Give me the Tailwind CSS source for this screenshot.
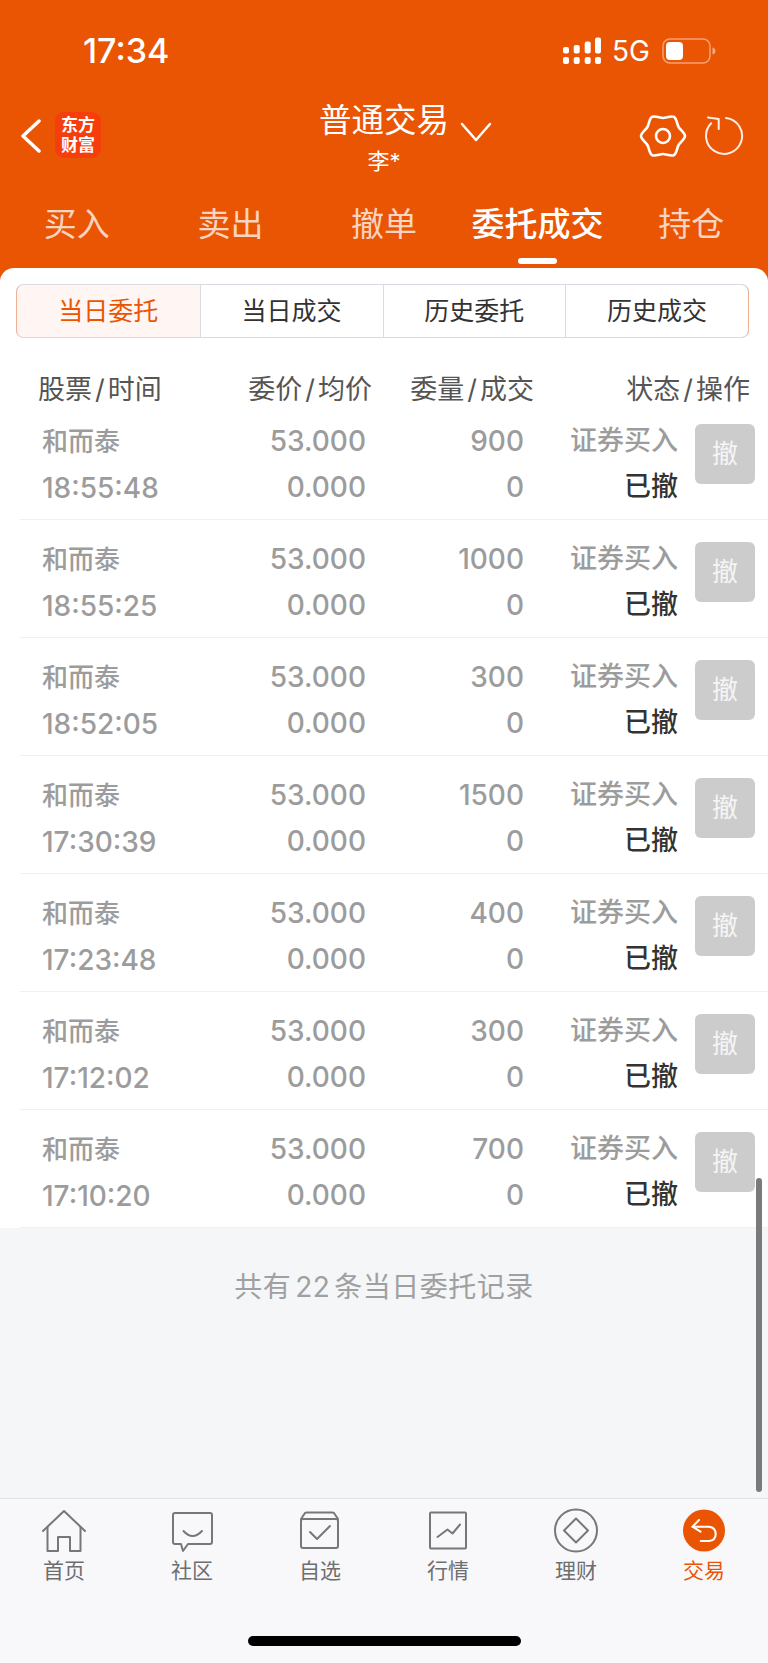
<!DOCTYPE html>
<html lang="zh">
<head>
    <meta charset="UTF-8" />
    <meta name="viewport" content="width=device-width, initial-scale=1.0">
    <title>委托成交</title>
    <script src="https://cdn.jsdelivr.net/npm/@tailwindcss/browser@4"></script>
</head>
<body class="bg-[#f5f6f8] font-['Inter','Noto_Sans_CJK_SC',sans-serif]">
<div class="relative w-[768px] h-[1663px] overflow-hidden flex flex-col">
    <!-- Orange header -->
    <header class="bg-[#ea5504] text-white h-[280px] shrink-0">
        <!-- Status bar -->
        <div class="h-[100px] flex items-start justify-between pl-[83px] pr-[52px] pt-[32px]">
            <span class="text-[34px] leading-[38px] font-medium">17:34</span>
            <div class="flex items-center gap-[11px] h-[38px]">
                <svg width="38" height="28" viewBox="0 0 38 28" fill="white">
                    <rect x="0" y="10" width="6" height="6.500" rx="2"/><rect x="0" y="20" width="6" height="7" rx="2"/>
                    <rect x="10.700" y="8" width="6" height="8.500" rx="2"/><rect x="10.700" y="20" width="6" height="7" rx="2"/>
                    <rect x="21.700" y="4.500" width="6" height="12" rx="2"/><rect x="21.700" y="20" width="6" height="7" rx="2"/>
                    <rect x="32" y="0.500" width="6" height="16" rx="2"/><rect x="32" y="20" width="6" height="7" rx="2"/>
                </svg>
                <span class="text-[28px] leading-[38px]">5G</span>
                <svg width="54" height="26" viewBox="0 0 54 26" class="ml-[1px]">
                    <rect x="1" y="1" width="47" height="24" rx="7" fill="none" stroke="white" stroke-opacity="0.45" stroke-width="1.500"/>
                    <rect x="4" y="4" width="17" height="18" rx="4" fill="white"/>
                    <path d="M50.500 9.500c2 .5 3 2 3 3.500s-1 3-3 3.500z" fill="white" fill-opacity="0.5"/>
                </svg>
            </div>
        </div>
        <!-- Title bar -->
        <div class="h-[100px] flex items-start pl-[21px] pr-[24px]">
            <svg width="20" height="34" viewBox="0 0 20 34" class="mt-[19px]" fill="none" stroke="white" stroke-width="3.500" stroke-linecap="round" stroke-linejoin="round">
                <path d="M18 2 L2 17 L18 32"/>
            </svg>
            <div class="ml-[14px] mt-[12px] w-[46px] h-[46px] rounded-[9px] bg-[#f63d0c] flex flex-col items-center justify-center text-[17px] leading-[20px] font-bold">
                <span>东方</span><span>财富</span>
            </div>
            <div class="ml-[218px] w-[130px] text-center pt-[1px]">
                <div class="text-[32.500px] leading-[40px] whitespace-nowrap">普通交易</div>
                <div class="text-[22px] leading-[28px] mt-[6px]">李*</div>
            </div>
            <svg width="32" height="20" viewBox="0 0 32 20" class="ml-[11px] mt-[22px]" fill="none" stroke="white" stroke-width="2.500" stroke-linecap="round" stroke-linejoin="round">
                <path d="M2 2 L16 18 L30 2"/>
            </svg>
            <svg width="48" height="48" viewBox="0 0 48 48" class="ml-auto mt-[12px]" fill="none" stroke="white" stroke-width="2.600" stroke-linejoin="round">
                <path d="M24 6C27 6 32.400 3.450 35 4.950C37.600 6.450 38.090 12.400 39.590 15C41.090 17.600 46 21 46 24C46 27 41.090 30.400 39.590 33C38.090 35.600 37.600 41.550 35 43.050C32.400 44.550 27 42 24 42C21 42 15.600 44.550 13 43.050C10.400 41.550 9.910 35.600 8.410 33C6.910 30.400 2 27 2 24C2 21 6.910 17.600 8.410 15C9.910 12.400 10.400 6.450 13 4.950C15.600 3.450 21 6 24 6Z"/>
                <circle cx="24" cy="24" r="7"/>
            </svg>
            <svg width="40" height="40" viewBox="0 0 40 40" class="ml-[17px] mt-[16px]" fill="none" stroke="white" stroke-width="2" stroke-opacity="0.9" stroke-linecap="round" stroke-linejoin="round">
                <path d="M22 2 A18 18 0 1 1 7.200 7.300"/>
                <path d="M4 1.500 L14.700 3 L14.700 13"/>
            </svg>
        </div>
        <!-- Tabs -->
        <nav class="grid grid-cols-5 h-[80px] text-center text-[33px] leading-[44px] text-white/75 pt-[2px]">
            <a>买入</a>
            <a>卖出</a>
            <a>撤单</a>
            <a class="relative text-white font-medium whitespace-nowrap">委托成交<span class="absolute left-[57px] top-[56px] w-[39px] h-[6px] rounded-full bg-white"></span></a>
            <a>持仓</a>
        </nav>
    </header>

    <!-- White card -->
    <main class="-mt-[12px] bg-white rounded-t-[14px] h-[960px] shrink-0 pt-[16px]">
        <div class="ml-[16px] mr-[19px] h-[54px] grid grid-cols-4 border border-[#d8dce2] rounded-[7px] text-[25px] leading-[52px] text-center text-[#333333]">
            <div class="bg-[#fff5f2] text-[#ea5504] border-l border-[#eeb093] rounded-l-[7px] -ml-px">当日委托</div>
            <div class="border-l border-[#d8dce2]">当日成交</div>
            <div class="border-l border-[#d8dce2]">历史委托</div>
            <div class="border-l border-r border-l-[#d8dce2] border-r-[#eeb093] rounded-r-[7px] -mr-px">历史成交</div>
        </div>

        <!-- Column titles -->
        <div class="flex h-[64px] pt-[34px] pl-[38px] text-[27px] leading-[36px] text-[#555555]">
            <div class="w-[150px] whitespace-nowrap">股票<span class="px-[3px]">/</span>时间</div>
            <div class="w-[184px] text-right whitespace-nowrap">委价<span class="px-[3px]">/</span>均价</div>
            <div class="w-[162px] text-right whitespace-nowrap">委量<span class="px-[3px]">/</span>成交</div>
            <div class="w-[216px] text-right whitespace-nowrap">状态<span class="px-[3px]">/</span>操作</div>
        </div>

        <div class="ml-[20px] text-[28px] font-medium leading-[46px] text-[#9c9c9c]">
            <div class="flex h-[118px] pl-[22px] pt-[16px] border-b border-[#f0f0f0]">
                <div class="w-[150px]"><span class="text-[26px]">和而泰</span><br>18:55:48</div>
                <div class="w-[174px] text-right">53.000<br>0.000</div>
                <div class="w-[158px] text-right">900<br>0</div>
                <div class="w-[154px] text-right text-[27px]">证券买入<br><span class="text-[#333333]">已撤</span></div>
                <div class="ml-[17px] mt-[6px] w-[60px] h-[60px] rounded-[6px] bg-[#cccccc] text-white/80 text-center font-normal text-[26px] leading-[60px]">撤</div>
            </div>
            <div class="flex h-[118px] pl-[22px] pt-[16px] border-b border-[#f0f0f0]">
                <div class="w-[150px]"><span class="text-[26px]">和而泰</span><br>18:55:25</div>
                <div class="w-[174px] text-right">53.000<br>0.000</div>
                <div class="w-[158px] text-right">1000<br>0</div>
                <div class="w-[154px] text-right text-[27px]">证券买入<br><span class="text-[#333333]">已撤</span></div>
                <div class="ml-[17px] mt-[6px] w-[60px] h-[60px] rounded-[6px] bg-[#cccccc] text-white/80 text-center font-normal text-[26px] leading-[60px]">撤</div>
            </div>
            <div class="flex h-[118px] pl-[22px] pt-[16px] border-b border-[#f0f0f0]">
                <div class="w-[150px]"><span class="text-[26px]">和而泰</span><br>18:52:05</div>
                <div class="w-[174px] text-right">53.000<br>0.000</div>
                <div class="w-[158px] text-right">300<br>0</div>
                <div class="w-[154px] text-right text-[27px]">证券买入<br><span class="text-[#333333]">已撤</span></div>
                <div class="ml-[17px] mt-[6px] w-[60px] h-[60px] rounded-[6px] bg-[#cccccc] text-white/80 text-center font-normal text-[26px] leading-[60px]">撤</div>
            </div>
            <div class="flex h-[118px] pl-[22px] pt-[16px] border-b border-[#f0f0f0]">
                <div class="w-[150px]"><span class="text-[26px]">和而泰</span><br>17:30:39</div>
                <div class="w-[174px] text-right">53.000<br>0.000</div>
                <div class="w-[158px] text-right">1500<br>0</div>
                <div class="w-[154px] text-right text-[27px]">证券买入<br><span class="text-[#333333]">已撤</span></div>
                <div class="ml-[17px] mt-[6px] w-[60px] h-[60px] rounded-[6px] bg-[#cccccc] text-white/80 text-center font-normal text-[26px] leading-[60px]">撤</div>
            </div>
            <div class="flex h-[118px] pl-[22px] pt-[16px] border-b border-[#f0f0f0]">
                <div class="w-[150px]"><span class="text-[26px]">和而泰</span><br>17:23:48</div>
                <div class="w-[174px] text-right">53.000<br>0.000</div>
                <div class="w-[158px] text-right">400<br>0</div>
                <div class="w-[154px] text-right text-[27px]">证券买入<br><span class="text-[#333333]">已撤</span></div>
                <div class="ml-[17px] mt-[6px] w-[60px] h-[60px] rounded-[6px] bg-[#cccccc] text-white/80 text-center font-normal text-[26px] leading-[60px]">撤</div>
            </div>
            <div class="flex h-[118px] pl-[22px] pt-[16px] border-b border-[#f0f0f0]">
                <div class="w-[150px]"><span class="text-[26px]">和而泰</span><br>17:12:02</div>
                <div class="w-[174px] text-right">53.000<br>0.000</div>
                <div class="w-[158px] text-right">300<br>0</div>
                <div class="w-[154px] text-right text-[27px]">证券买入<br><span class="text-[#333333]">已撤</span></div>
                <div class="ml-[17px] mt-[6px] w-[60px] h-[60px] rounded-[6px] bg-[#cccccc] text-white/80 text-center font-normal text-[26px] leading-[60px]">撤</div>
            </div>
            <div class="flex h-[118px] pl-[22px] pt-[16px] border-b border-[#f0f0f0]">
                <div class="w-[150px]"><span class="text-[26px]">和而泰</span><br>17:10:20</div>
                <div class="w-[174px] text-right">53.000<br>0.000</div>
                <div class="w-[158px] text-right">700<br>0</div>
                <div class="w-[154px] text-right text-[27px]">证券买入<br><span class="text-[#333333]">已撤</span></div>
                <div class="ml-[17px] mt-[6px] w-[60px] h-[60px] rounded-[6px] bg-[#cccccc] text-white/80 text-center font-normal text-[26px] leading-[60px]">撤</div>
            </div>
        </div>
    </main>

    <!-- Record count -->
    <div class="h-[270px] shrink-0 pt-[41px] text-center text-[28px] leading-[36px] tracking-[0.500px] text-[#a0a0a0]">共有<span class="px-[4px]">22</span>条当日委托记录</div>

    <!-- Bottom nav -->
    <nav class="flex-1 bg-[#f8f8fb] border-t border-[#e3e3e6] text-[21px] leading-[28px] text-[#6e6e6e]">
        <div class="grid grid-cols-6 text-center">
            <a class="flex flex-col items-center">
                <svg width="48" height="48" viewBox="0 0 48 48" class="mt-[9px]" fill="none" stroke="#777777" stroke-width="2" stroke-linejoin="round" stroke-linecap="round">
                    <path d="M3 23 L24 3 L45 23"/>
                    <path d="M7.500 19 V43 H18 V29 H30 V43 H40.500 V19"/>
                </svg>
                <span class="mt-[1px]">首页</span>
            </a>
            <a class="flex flex-col items-center">
                <svg width="48" height="48" viewBox="0 0 48 48" class="mt-[9px]" fill="none" stroke="#777777" stroke-width="2" stroke-linejoin="round" stroke-linecap="round">
                    <path d="M7 5 H42 Q44 5 44 7 V34 Q44 36 42 36 H20 L15 43 L13 36 H7 Q5 36 5 34 V7 Q5 5 7 5Z"/>
                    <path d="M15.500 23 Q24.500 33 34 23"/>
                </svg>
                <span class="mt-[1px]">社区</span>
            </a>
            <a class="flex flex-col items-center">
                <svg width="48" height="48" viewBox="0 0 48 48" class="mt-[9px]" fill="none" stroke="#777777" stroke-width="2" stroke-linejoin="round" stroke-linecap="round">
                    <path d="M5 11 L9 5 Q9.500 4.500 11 4.500 H36 Q37.500 4.500 38 5 L42 11"/>
                    <rect x="5" y="11" width="37" height="29" rx="2"/>
                    <path d="M14 24 L21 31 L34 18"/>
                </svg>
                <span class="mt-[1px]">自选</span>
            </a>
            <a class="flex flex-col items-center">
                <svg width="48" height="48" viewBox="0 0 48 48" class="mt-[9px]" fill="none" stroke="#777777" stroke-width="2" stroke-linejoin="round" stroke-linecap="round">
                    <rect x="6" y="4.500" width="36" height="36" rx="1"/>
                    <path d="M13.500 29 L23.500 21.500 L28.500 25.500 L36 16.500"/>
                </svg>
                <span class="mt-[1px]">行情</span>
            </a>
            <a class="flex flex-col items-center">
                <svg width="48" height="48" viewBox="0 0 48 48" class="mt-[9px]" fill="none" stroke="#777777" stroke-width="2" stroke-linejoin="round" stroke-linecap="round">
                    <circle cx="24" cy="22.500" r="21"/>
                    <path d="M24 10.500 L36 22.500 L24 34.500 L12 22.500Z"/>
                </svg>
                <span class="mt-[1px]">理财</span>
            </a>
            <a class="flex flex-col items-center text-[#ea5504]">
                <svg width="48" height="48" viewBox="0 0 48 48" class="mt-[9px]" fill="none" stroke="white" stroke-width="2" stroke-linejoin="round" stroke-linecap="round">
                    <circle cx="24" cy="22.500" r="21" fill="#ea5504" stroke="none"/>
                    <path d="M19 12 L12.500 18.700 L20.500 23.700"/>
                    <path d="M12.500 18.700 H29 Q35.700 19.500 35.700 26 Q35.700 32.500 29 33 H20.700"/>
                </svg>
                <span class="mt-[1px]">交易</span>
            </a>
        </div>
    </nav>

    <!-- Scroll indicator and home bar lie over the page -->
    <div class="absolute left-[756px] top-[1178px] w-[6px] h-[314px] rounded-full bg-[#7a7a7a]"></div>
    <div class="absolute left-[248px] top-[1636px] w-[273px] h-[10px] rounded-full bg-black"></div>
</div>
</body>
</html>
